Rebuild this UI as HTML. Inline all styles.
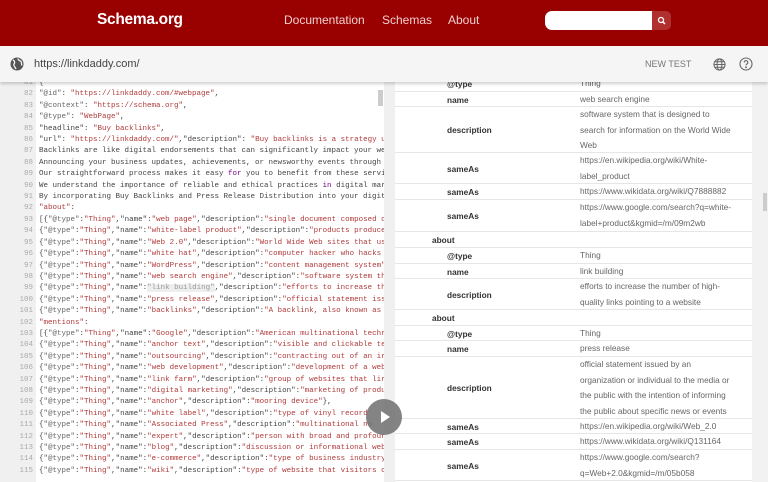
<!DOCTYPE html>
<html><head><meta charset="utf-8"><style>
*{margin:0;padding:0;box-sizing:border-box}
body{width:768px;height:482px;overflow:hidden;background:#f2f2f2;font-family:"Liberation Sans",sans-serif;position:relative}
.hdr{position:absolute;left:0;top:0;width:768px;height:46px;background:#990000}
.logo{position:absolute;left:97px;top:11px;color:#fff;font-weight:bold;font-size:15.5px;letter-spacing:-0.3px}
.nav{position:absolute;top:13px;color:#f0d0d0;font-size:12px}
.search{position:absolute;left:545px;top:11px;width:108px;height:19px;background:#fff;border-radius:7px 0 0 7px}
.sbtn{position:absolute;left:652px;top:11px;width:19px;height:19px;background:#b03030;border-radius:0 5px 5px 0}
.bar{position:absolute;left:0;top:46px;width:768px;height:36px;background:#f5f5f5;box-shadow:0 2px 3px rgba(0,0,0,.18);z-index:5}
.url{position:absolute;left:34px;top:12px;font-size:11px;color:#444}
.nt{position:absolute;left:645px;top:13px;font-size:9px;color:#777}
.code{position:absolute;left:0;top:82px;width:384px;height:400px;background:#fff;overflow:hidden}
.gut{position:absolute;left:0;top:0;width:36px;height:400px;background:#f0f0f0}
.lines{position:absolute;left:0;top:-4px;font-family:"Liberation Mono",monospace;font-size:7.5px;line-height:11.4px;white-space:pre;color:#444}
.ln{display:inline-block;width:33px;text-align:right;color:#aaa;margin-right:6px}
.s{color:#b03a3a}.k{color:#666}
.sb{position:absolute;left:378px;top:8px;width:5px;height:16px;background:#ccc}
.tbl{position:absolute;left:395px;top:76px;width:357px;height:406px;background:#fff;font-size:8.3px;color:#666}
.r{position:absolute;left:0;width:357px;border-bottom:1px solid #e6e6e6}
.kk{position:absolute;left:52px;font-weight:bold;color:#333}
.ab{position:absolute;left:37px;font-weight:bold;color:#333}
.v{position:absolute;left:185px;line-height:15.5px;width:155px}
.play{position:absolute;left:366px;top:399px;width:36px;height:36px;border-radius:50%;background:rgba(110,110,110,.85);z-index:6}
.play:after{content:"";position:absolute;left:15px;top:12px;border-left:9px solid #fff;border-top:6px solid transparent;border-bottom:6px solid transparent}
</style></head><body>
<div class="hdr">
<div class="logo">Schema.org</div>
<div class="nav" style="left:284px">Documentation</div>
<div class="nav" style="left:382px">Schemas</div>
<div class="nav" style="left:448px">About</div>
<div class="search"></div>
<div class="sbtn"><svg width="19" height="19"><circle cx="9" cy="9" r="2.5" fill="none" stroke="#fff" stroke-width="1.3"/><line x1="10.8" y1="10.8" x2="13" y2="13" stroke="#fff" stroke-width="1.5"/></svg></div>
</div>
<div class="bar">
<svg style="position:absolute;left:10px;top:11px" width="14" height="14" viewBox="0 0 14 14"><circle cx="7" cy="7" r="6.5" fill="#555"/><path d="M3 3c2 1 2 3 1 4s1 3 2 5M8 1.5c0 2 2 2 3 3s0 3 1 4" stroke="#f5f5f5" stroke-width="1.3" fill="none"/></svg>
<div class="url">https://linkdaddy.com/</div>
<div class="nt">NEW TEST</div>
<svg style="position:absolute;left:713px;top:12px" width="13" height="13" viewBox="0 0 14 14" fill="none" stroke="#666" stroke-width="1.1"><circle cx="7" cy="7" r="6"/><ellipse cx="7" cy="7" rx="2.6" ry="6"/><line x1="1" y1="7" x2="13" y2="7"/><line x1="2" y1="4" x2="12" y2="4"/><line x1="2" y1="10" x2="12" y2="10"/></svg>
<svg style="position:absolute;left:739px;top:11px" width="14" height="14" viewBox="0 0 14 14" fill="none" stroke="#666" stroke-width="1.1"><circle cx="7" cy="7" r="6"/><path d="M5.2 5.5a1.8 1.8 0 1 1 2.5 1.6c-.6.3-.7.7-.7 1.3"/><circle cx="7" cy="10.3" r=".4" fill="#666"/></svg>
</div>
<div class="code"><div class="gut"></div>
<div class="lines"><span class="ln">81</span>{
<span class="ln">82</span><span class="k">"@id"</span>: <span class="s">"https://linkdaddy.com/#webpage"</span>,
<span class="ln">83</span><span class="k">"@context"</span>: <span class="s">"https://schema.org"</span>,
<span class="ln">84</span><span class="k">"@type"</span>: <span class="s">"WebPage"</span>,
<span class="ln">85</span>"headline": <span class="s">"Buy backlinks"</span>,
<span class="ln">86</span>"url": <span class="s">"https://linkdaddy.com/"</span>,"description": <span class="s">"Buy backlinks is a strategy u</span>
<span class="ln">87</span>Backlinks are like digital endorsements that can significantly impact your we
<span class="ln">88</span>Announcing your business updates, achievements, or newsworthy events through
<span class="ln">89</span>Our straightforward process makes it easy <span style="color:#708">for</span> you to benefit from these servi
<span class="ln">90</span>We understand the importance of reliable and ethical practices <span style="color:#708">in</span> digital mar
<span class="ln">91</span>By incorporating Buy Backlinks and Press Release Distribution into your digit
<span class="ln">92</span><span class="s">"about"</span>:
<span class="ln">93</span>[{<span class="k">"@type"</span>:<span class="s">"Thing"</span>,"name":<span class="s">"web page"</span>,"description":<span class="s">"single document composed c</span>
<span class="ln">94</span>{<span class="k">"@type"</span>:<span class="s">"Thing"</span>,"name":<span class="s">"white-label product"</span>,"description":<span class="s">"products produce</span>
<span class="ln">95</span>{<span class="k">"@type"</span>:<span class="s">"Thing"</span>,"name":<span class="s">"Web 2.0"</span>,"description":<span class="s">"World Wide Web sites that us</span>
<span class="ln">96</span>{<span class="k">"@type"</span>:<span class="s">"Thing"</span>,"name":<span class="s">"white hat"</span>,"description":<span class="s">"computer hacker who hacks</span>
<span class="ln">97</span>{<span class="k">"@type"</span>:<span class="s">"Thing"</span>,"name":<span class="s">"WordPress"</span>,"description":<span class="s">"content management system"</span>
<span class="ln">98</span>{<span class="k">"@type"</span>:<span class="s">"Thing"</span>,"name":<span class="s">"web search engine"</span>,"description":<span class="s">"software system th</span>
<span class="ln">99</span>{<span class="k">"@type"</span>:<span class="s">"Thing"</span>,"name":<span style="color:#999;background:#eee">"link building"</span>,"description":<span class="s">"efforts to increase th</span>
<span class="ln">100</span>{<span class="k">"@type"</span>:<span class="s">"Thing"</span>,"name":<span class="s">"press release"</span>,"description":<span class="s">"official statement iss</span>
<span class="ln">101</span>{<span class="k">"@type"</span>:<span class="s">"Thing"</span>,"name":<span class="s">"backlinks"</span>,"description":<span class="s">"A backlink, also known as</span>
<span class="ln">102</span><span class="s">"mentions"</span>:
<span class="ln">103</span>[{<span class="k">"@type"</span>:<span class="s">"Thing"</span>,"name":<span class="s">"Google"</span>,"description":<span class="s">"American multinational techr</span>
<span class="ln">104</span>{<span class="k">"@type"</span>:<span class="s">"Thing"</span>,"name":<span class="s">"anchor text"</span>,"description":<span class="s">"visible and clickable te</span>
<span class="ln">105</span>{<span class="k">"@type"</span>:<span class="s">"Thing"</span>,"name":<span class="s">"outsourcing"</span>,"description":<span class="s">"contracting out of an ir</span>
<span class="ln">106</span>{<span class="k">"@type"</span>:<span class="s">"Thing"</span>,"name":<span class="s">"web development"</span>,"description":<span class="s">"development of a web</span>
<span class="ln">107</span>{<span class="k">"@type"</span>:<span class="s">"Thing"</span>,"name":<span class="s">"link farm"</span>,"description":<span class="s">"group of websites that lir</span>
<span class="ln">108</span>{<span class="k">"@type"</span>:<span class="s">"Thing"</span>,"name":<span class="s">"digital marketing"</span>,"description":<span class="s">"marketing of produ</span>
<span class="ln">109</span>{<span class="k">"@type"</span>:<span class="s">"Thing"</span>,"name":<span class="s">"anchor"</span>,"description":<span class="s">"mooring device"</span>},
<span class="ln">110</span>{<span class="k">"@type"</span>:<span class="s">"Thing"</span>,"name":<span class="s">"white label"</span>,"description":<span class="s">"type of vinyl record</span>
<span class="ln">111</span>{<span class="k">"@type"</span>:<span class="s">"Thing"</span>,"name":<span class="s">"Associated Press"</span>,"description":<span class="s">"multinational no</span>
<span class="ln">112</span>{<span class="k">"@type"</span>:<span class="s">"Thing"</span>,"name":<span class="s">"expert"</span>,"description":<span class="s">"person with broad and profour</span>
<span class="ln">113</span>{<span class="k">"@type"</span>:<span class="s">"Thing"</span>,"name":<span class="s">"blog"</span>,"description":<span class="s">"discussion or informational web</span>
<span class="ln">114</span>{<span class="k">"@type"</span>:<span class="s">"Thing"</span>,"name":<span class="s">"e-commerce"</span>,"description":<span class="s">"type of business industry</span>
<span class="ln">115</span>{<span class="k">"@type"</span>:<span class="s">"Thing"</span>,"name":<span class="s">"wiki"</span>,"description":<span class="s">"type of website that visitors c</span></div>
<div class="sb"></div>
</div>
<div style="position:absolute;left:384px;top:82px;width:11px;height:400px;background:#f0f0f0"></div>
<div class="tbl">
<div class="r" style="top:0;height:16px"><span class="kk" style="top:3px">@type</span><span class="v" style="top:0">Thing</span></div>
<div class="r" style="top:16px;height:15px"><span class="kk" style="top:3px">name</span><span class="v" style="top:0">web search engine</span></div>
<div class="r" style="top:31px;height:46px"><span class="kk" style="top:18px">description</span><span class="v" style="top:0">software system that is designed to search for information on the World Wide Web</span></div>
<div class="r" style="top:77px;height:31px"><span class="kk" style="top:11px">sameAs</span><span class="v" style="top:0">https://en.wikipedia.org/wiki/White-label_product</span></div>
<div class="r" style="top:108px;height:16px"><span class="kk" style="top:3px">sameAs</span><span class="v" style="top:0">https://www.wikidata.org/wiki/Q7888882</span></div>
<div class="r" style="top:124px;height:32px"><span class="kk" style="top:11px">sameAs</span><span class="v" style="top:0">https://www.google.com/search?q=white-label+product&amp;kgmid=/m/09m2wb</span></div>
<div class="r" style="top:156px;height:16px"><span class="ab" style="top:3px">about</span></div>
<div class="r" style="top:172px;height:16px"><span class="kk" style="top:3px">@type</span><span class="v" style="top:0">Thing</span></div>
<div class="r" style="top:188px;height:15px"><span class="kk" style="top:3px">name</span><span class="v" style="top:0">link building</span></div>
<div class="r" style="top:203px;height:31px"><span class="kk" style="top:11px">description</span><span class="v" style="top:0">efforts to increase the number of high-quality links pointing to a website</span></div>
<div class="r" style="top:234px;height:16px"><span class="ab" style="top:3px">about</span></div>
<div class="r" style="top:250px;height:15px"><span class="kk" style="top:3px">@type</span><span class="v" style="top:0">Thing</span></div>
<div class="r" style="top:265px;height:16px"><span class="kk" style="top:3px">name</span><span class="v" style="top:0">press release</span></div>
<div class="r" style="top:281px;height:62px"><span class="kk" style="top:26px">description</span><span class="v" style="top:0">official statement issued by an<br>organization or individual to the media or the public with the intention of informing the public about specific news or events</span></div>
<div class="r" style="top:343px;height:15px"><span class="kk" style="top:3px">sameAs</span><span class="v" style="top:0">https://en.wikipedia.org/wiki/Web_2.0</span></div>
<div class="r" style="top:358px;height:16px"><span class="kk" style="top:3px">sameAs</span><span class="v" style="top:0">https://www.wikidata.org/wiki/Q131164</span></div>
<div class="r" style="top:374px;height:31px"><span class="kk" style="top:11px">sameAs</span><span class="v" style="top:0">https://www.google.com/search?<br>q=Web+2.0&amp;kgmid=/m/05b058</span></div>
</div>
<div style="position:absolute;left:763px;top:193px;width:4px;height:18px;background:#ccc"></div>
<div class="play"></div>
</body></html>
